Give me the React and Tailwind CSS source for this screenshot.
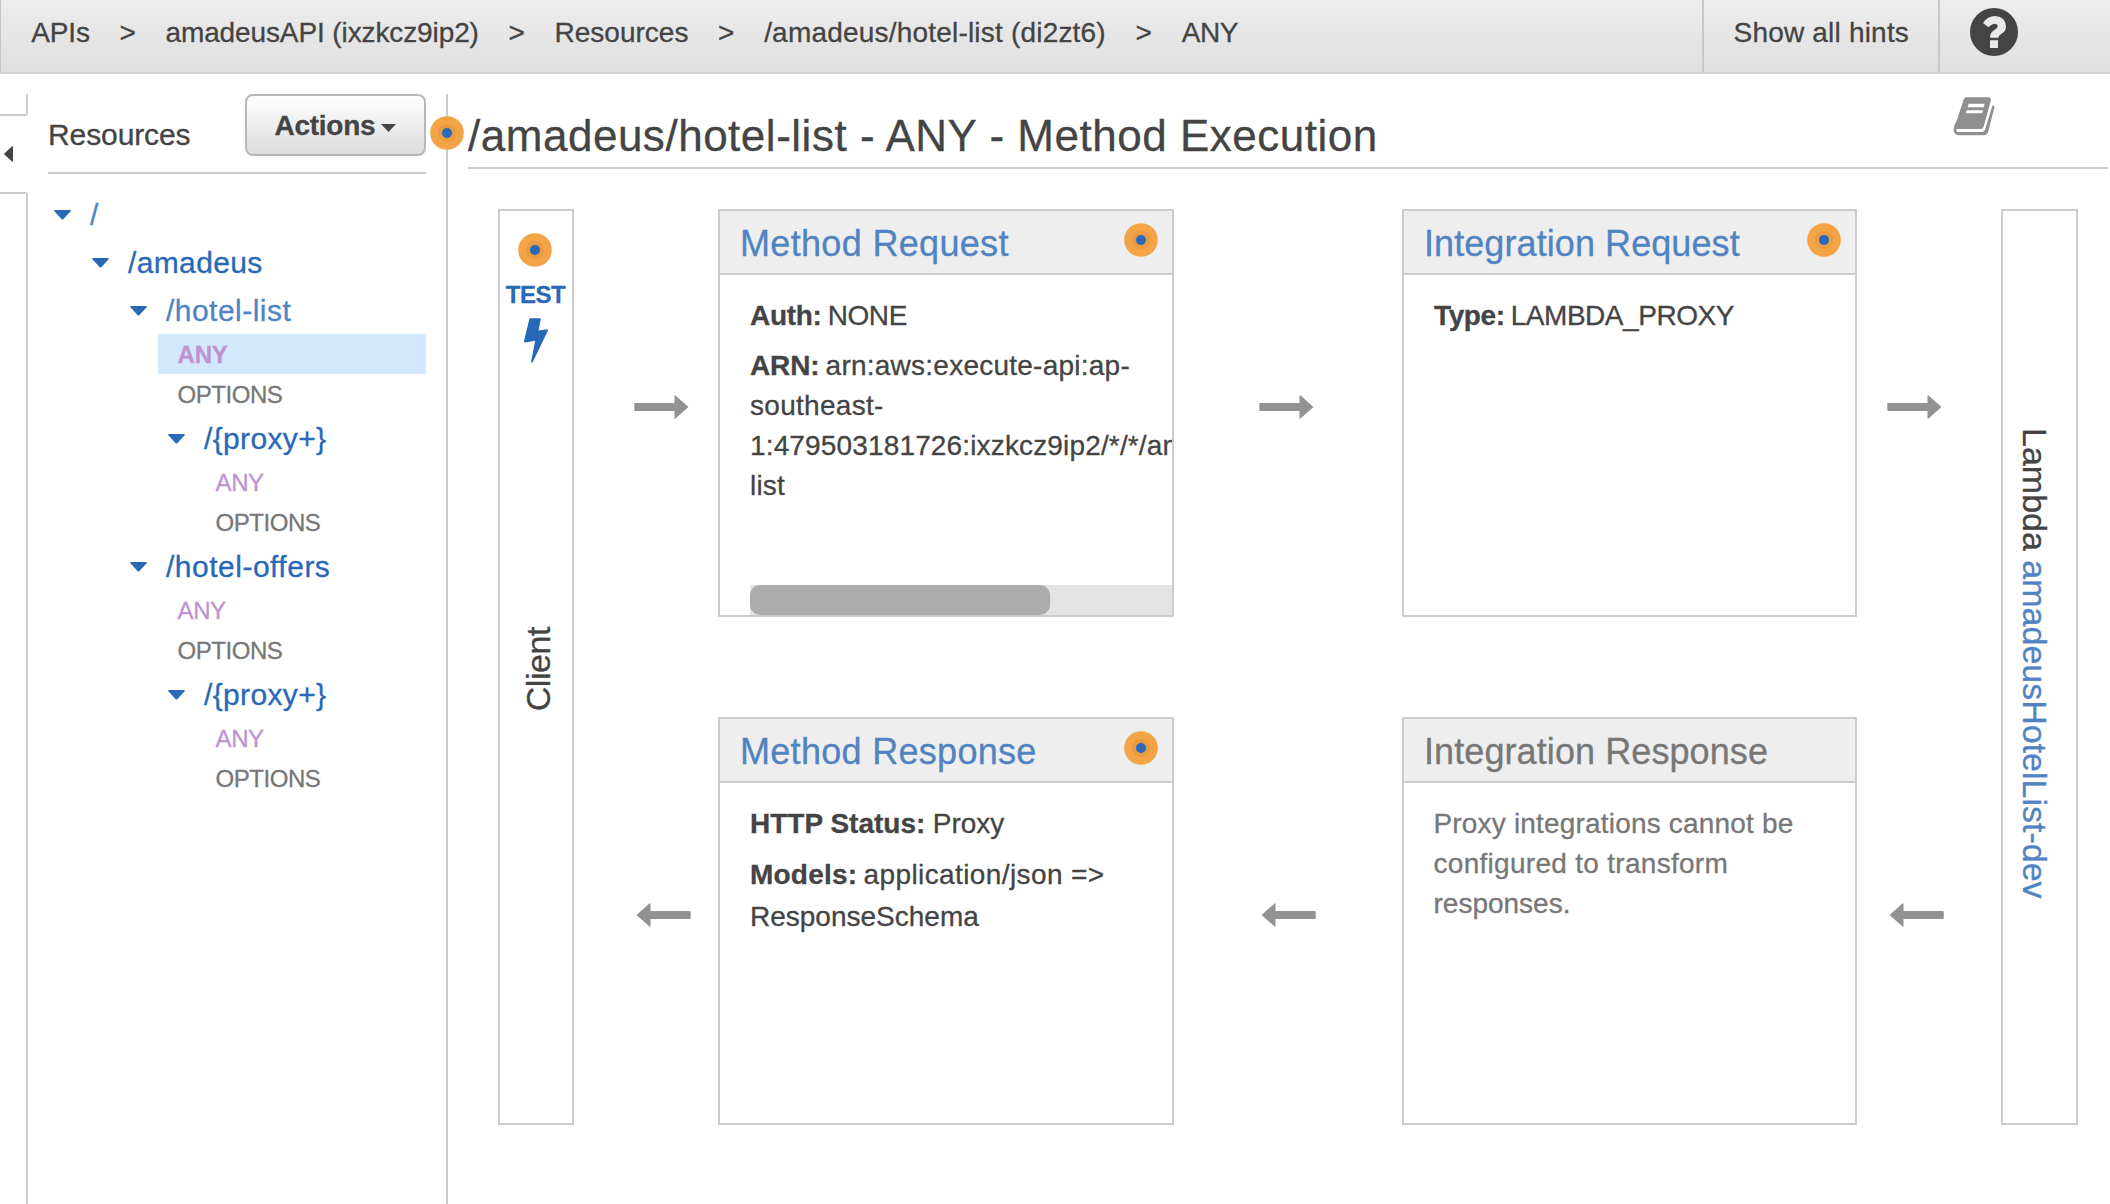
const Hint = ({ className = '' }) => (
  <svg className={'h-[34px] w-[34px] shrink-0 ' + className} viewBox="0 0 34 34">
    <circle cx="17" cy="17" r="16.8" fill="#f4a345" />
    <circle cx="17" cy="17" r="9" fill="#e79b42" />
    <circle cx="17" cy="17" r="5" fill="#2968b8" />
  </svg>
);

const HelpIcon = () => (
  <svg className="h-12 w-12" viewBox="120 24 144 144">
    <circle cx="192" cy="96" r="72" fill="#444" />
    <path
      fill="#e9e9e9"
      d="M159 69Q172 48 196 48Q228 51 228 80Q228 94 214 101Q206 106 205 113H180Q179 98 194 89Q204 83 203 78Q202 71 192 71Q184 73 175 82ZM180 121H204V144H180Z"
    />
  </svg>
);

const BookIcon = () => (
  <svg className="h-[39px] w-[42px]" viewBox="68 290 126 117">
    <path
      fill="#8f8f8f"
      fillRule="evenodd"
      d="M107 291H174Q184 292 181 302L160 379Q158 386 150 386H86Q73 385 75 373L98 304Q100 293 107 291ZM115 310L112 321H160L163 310ZM109 330L106 339H155L158 330Z"
    />
    <path
      fill="#8f8f8f"
      d="M187 314Q193 317 192 322L174 392Q171 404 161 405H86Q69 403 70 386Q71 376 76 366L82 385Q77 386 78 391Q79 395 86 395H155Q162 394 164 388Z"
    />
  </svg>
);

const Arrow = ({ flip }) => (
  <svg className={'h-6 w-[55px] ' + (flip ? 'rotate-180' : '')} viewBox="0 0 55 24">
    <path fill="#929292" d="M1 8H40.500V1Q40.500 0 41.500 .5L54.500 12L41.500 23.500Q40.500 24 40.500 23V16H1Q.3 16 .3 15V9Q.3 8 1 8Z" />
  </svg>
);

const Caret = () => (
  <svg className="mt-px h-[10px] w-[17px] shrink-0" viewBox="0 0 17 10">
    <path fill="#2968b8" d="M.8 0H16.200Q17.200 .3 16.600 1.300L9.300 9.200Q8.500 10 7.700 9.200L.4 1.300Q-.2 .3 .8 0Z" />
  </svg>
);

const Sep = () => <span className="mx-[29.7px]">&gt;</span>;

const Node = ({ indent, tone = 'text-[#2968b8]', tracking = 'tracking-[0.36px]', children }) => (
  <div className={'flex h-12 items-center ' + indent}>
    <Caret />
    <span className={'ml-[19px] text-[30px] leading-[49px] ' + tracking + ' ' + tone}>{children}</span>
  </div>
);

const Method = ({ indent, active, options }) => (
  <div className={indent}>
    <div
      className={
        'h-10 pl-[19.5px] text-[24px] leading-[41px] ' +
        (options
          ? 'tracking-[-0.45px] text-[#777]'
          : active
            ? 'bg-[#d3e7fd] font-bold tracking-[-0.2px] text-[#bd93d1]'
            : 'tracking-[-0.37px] text-[#bd93d1]')
      }
    >
      {options ? 'OPTIONS' : 'ANY'}
    </div>
  </div>
);

const Card = ({ title, tracking, tone = 'text-[#5083c1]', hint, children }) => (
  <section className="flex h-[408px] min-w-0 flex-col overflow-hidden border-2 border-[#ccc]">
    <header className="flex h-16 shrink-0 justify-between border-b-2 border-[#ccc] bg-[#eee] pr-[14px] pl-5">
      <h2 className={'text-[36px] leading-[65px] whitespace-nowrap ' + tracking + ' ' + tone}>{title}</h2>
      {hint && <Hint className="mt-3" />}
    </header>
    {children}
  </section>
);

const bodyText = 'pt-[20.5px] text-[28px] leading-[40px] whitespace-nowrap';

export default function App() {
  return (
    <div className="flex h-[1204px] w-[2110px] flex-col overflow-hidden bg-white font-['Liberation_Sans',Arial,sans-serif] text-[#444] [-webkit-text-stroke:0.3px]">
      <nav className="flex h-[74px] shrink-0 border-b-2 border-l border-b-[#d5d5d5] border-l-[#c4c4c4] bg-linear-to-b from-[#ededed] to-[#dfdfdf] text-[28px] leading-[65px] whitespace-nowrap">
        <div className="flex flex-1 pl-[30.3px]">
          <span className="tracking-[-0.18px]">APIs</span>
          <Sep />
          <span className="tracking-[-0.11px]">amadeusAPI (ixzkcz9ip2)</span>
          <Sep />
          <span>Resources</span>
          <Sep />
          <span className="tracking-[0.2px]">/amadeus/hotel-list (di2zt6)</span>
          <Sep />
          <span className="tracking-[-0.35px]">ANY</span>
        </div>
        <div className="w-[236px] border-l-2 border-[#c8c8c8] pl-[29.5px] tracking-[0.2px]">Show all hints</div>
        <div className="w-[172px] border-l-2 border-[#c8c8c8] pt-2 pl-[30px]">
          <HelpIcon />
        </div>
      </nav>

      <div className="flex min-h-0 flex-1 pt-5">
        <div className="flex w-7 flex-col">
          <div className="h-[22px] rounded-br-[3px] border-r-2 border-b-2 border-[#ccc]" />
          <div className="flex h-[76px] items-center pl-1">
            <svg className="h-4 w-[9px]" viewBox="0 0 9 16">
              <path fill="#444" d="M8 .3Q9 0 9 1V15Q9 16 8 15.500L.4 8.600Q0 8 .4 7.400Z" />
            </svg>
          </div>
          <div className="flex-1 rounded-tr-[3px] border-t-2 border-r-2 border-[#ccc]" />
        </div>

        <aside className="w-[420px] border-r-2 border-[#ccc] px-5">
          <div className="flex h-20 justify-between border-b-2 border-[#ccc]">
            <h1 className="text-[30px] leading-[81px] tracking-[-0.1px]">Resources</h1>
            <button className="flex h-[62px] w-[181px] items-start rounded-lg border-2 border-[#b8b8b8] bg-linear-to-b from-white to-[#dcdcdc] pl-[27.5px] text-[28px] leading-[59px] font-bold tracking-[-0.27px]">
              Actions
              <svg className="mt-7 ml-[6px] h-2 w-[15px]" viewBox="0 0 15 8">
                <path fill="#444" d="M0 0H15L7.500 8Z" />
              </svg>
            </button>
          </div>
          <div className="mt-4">
            <Node indent="pl-[6px]" tone="text-[#5083c1]">/</Node>
            <Node indent="pl-[44px]">/amadeus</Node>
            <Node indent="pl-[82px]" tone="text-[#5083c1]" tracking="tracking-[0.47px]">/hotel-list</Node>
            <Method indent="pl-[110px]" active />
            <Method indent="pl-[110px]" options />
            <Node indent="pl-[120px]">{'/{proxy+}'}</Node>
            <Method indent="pl-[148px]" />
            <Method indent="pl-[148px]" options />
            <Node indent="pl-[82px]" tracking="tracking-[0.5px]">/hotel-offers</Node>
            <Method indent="pl-[110px]" />
            <Method indent="pl-[110px]" options />
            <Node indent="pl-[120px]">{'/{proxy+}'}</Node>
            <Method indent="pl-[148px]" />
            <Method indent="pl-[148px]" options />
          </div>
        </aside>

        <main className="relative flex-1 pl-5">
          <Hint className="absolute top-[22px] -left-[18px]" />
          <header className="mr-[2px] flex h-[75px] justify-between border-b-2 border-[#ccc] pr-[113px]">
            <h2 className="text-[44px] leading-[83px] tracking-[0.52px] whitespace-nowrap">
              /amadeus/hotel-list - ANY - Method Execution
            </h2>
            <div className="pt-[3px]">
              <BookIcon />
            </div>
          </header>

          <div className="mt-10 ml-[30px] flex h-[916px]">
            <div className="flex w-[76px] flex-col items-center border-2 border-[#ccc]">
              <Hint className="mt-[22px] mr-[2px]" />
              <span className="mt-4 mr-px text-[24px] leading-[24px] font-bold tracking-[-0.46px] text-[#2968b8]">TEST</span>
              <svg className="mt-[11px] h-[45px] w-6" viewBox="0 0 24 45">
                <path
                  fill="#2968b8"
                  d="M6.500 .2H16Q17 .3 16.700 1.300L14.500 12.600L23 11.200Q24.400 11.200 24 12.600L8.800 44Q7.500 45.400 7 44L11.200 22.800L1 24.400Q-.2 24.200 0 23L5.300 1.200Q5.600 .3 6.500 .2Z"
                />
              </svg>
              <span className="mt-[264px] ml-[4px] rotate-180 text-[34px] leading-[40px] tracking-[-0.44px] [writing-mode:vertical-rl]">
                Client
              </span>
            </div>

            <div className="grid grid-cols-[144px_456px_228px_455px_144px] gap-y-[100px]">
              <div className="pt-[186px] pl-[60px]"><Arrow /></div>
              <Card title="Method Request" tracking="tracking-[0.33px]" hint>
                <div className={bodyText + ' pl-[30px]'}>
                  <p>
                    <b className="tracking-[-0.29px]">Auth:</b>
                    <span className="ml-[6px] tracking-[-0.41px]">NONE</span>
                  </p>
                  <p className="mt-[10px]">
                    <b className="tracking-[-0.1px]">ARN:</b>
                    <span className="ml-[6px] tracking-[0.24px]">arn:aws:execute-api:ap-</span>
                    <span className="block tracking-[0.3px]">southeast-</span>
                    <span className="block tracking-[0.15px]">1:479503181726:ixzkcz9ip2/*/*/amadeus/hotel-</span>
                    <span className="block tracking-[0.19px]">list</span>
                  </p>
                </div>
                <div className="mt-auto ml-[30px] h-[30px] shrink-0 bg-[#e3e3e3]">
                  <div className="h-full w-[300px] rounded-[10px] bg-[#ababab]" />
                </div>
              </Card>
              <div className="pt-[186px] pl-[85px]"><Arrow /></div>
              <Card title="Integration Request" tracking="tracking-[0.08px]" hint>
                <div className={bodyText + ' pl-[30px]'}>
                  <p>
                    <b className="tracking-[-0.37px]">Type:</b>
                    <span className="ml-[6px] tracking-[-0.47px]">LAMBDA_PROXY</span>
                  </p>
                </div>
              </Card>
              <div className="pt-[186px] pl-[30px]"><Arrow /></div>

              <div className="pt-[186px] pl-[62px]"><Arrow flip /></div>
              <Card title="Method Response" tracking="tracking-[0.3px]" hint>
                <div className={bodyText + ' pl-[30px]'}>
                  <p>
                    <b>HTTP Status:</b>
                    <span className="ml-[7.5px]">Proxy</span>
                  </p>
                  <p className="mt-[10px] leading-[42px]">
                    <b className="tracking-[0.2px]">Models:</b>
                    <span className="ml-[6.3px] tracking-[0.4px]">application/json =&gt;</span>
                    <span className="block">ResponseSchema</span>
                  </p>
                </div>
              </Card>
              <div className="pt-[186px] pl-[87px]"><Arrow flip /></div>
              <Card title="Integration Response" tracking="tracking-[0.09px]" tone="text-[#777]">
                <p className={bodyText + ' pl-[29.5px] text-[#777]'}>
                  <span className="block tracking-[0.18px]">Proxy integrations cannot be</span>
                  <span className="block tracking-[0.29px]">configured to transform</span>
                  <span className="block">responses.</span>
                </p>
              </Card>
              <div className="pt-[186px] pl-[32px]"><Arrow flip /></div>
            </div>

            <div className="flex w-[77px] shrink-0 justify-center border-2 border-[#ccc] pt-[216.5px] pr-2.5">
              <span className="text-[34px] leading-[40px] whitespace-nowrap [writing-mode:vertical-rl]">
                Lambda <span className="text-[#5083c1]">amadeusHotelList-dev</span>
              </span>
            </div>
          </div>
        </main>
      </div>
    </div>
  );
}
